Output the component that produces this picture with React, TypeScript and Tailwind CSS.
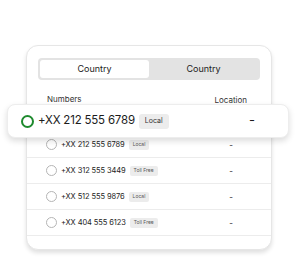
import React from 'react';

const rows = [
  { num: '+XX 212 555 6789', type: 'Local' },
  { num: '+XX 312 555 3449', type: 'Toll Free' },
  { num: '+XX 512 555 9876', type: 'Local' },
  { num: '+XX 404 555 6123', type: 'Toll Free' },
];

export default function App() {
  return (
    <div className="relative w-[300px] h-[278px] bg-white pt-[45px] pl-[26px] font-['Inter',sans-serif] text-[#1c1c1c]">
      {/* card */}
      <div className="w-[246px] h-[205px] rounded-[12px] border border-[#e6e6e6] bg-white shadow-[0_3px_4px_rgba(0,0,0,0.12)] overflow-hidden">
        {/* tabs */}
        <div className="mx-[11px] mt-[12px] h-[22px] rounded-[4px] bg-[#e3e3e3] p-[2px] flex text-[9px]">
          <div className="flex-1 rounded-[3px] bg-white flex items-center justify-center">Country</div>
          <div className="flex-1 flex items-center justify-center">Country</div>
        </div>

        {/* header */}
        <div className="flex justify-between pl-[20px] pr-[24px] pt-[13px] h-[52px] border-b border-[#ececec] text-[8px] leading-[12px] text-[#333]">
          <span>Numbers</span>
          <span className="mt-[1px]">Location</span>
        </div>

        {rows.map((r, i) => (
          <div key={i} className="flex items-center h-[26px] pl-[19px] border-b border-[#ececec] whitespace-nowrap">
            <span className="w-[11px] h-[11px] rounded-full border border-[#b5b5b5] shrink-0" />
            <span className="ml-[4px] text-[7.5px] tracking-[-0.1px]">{r.num}</span>
            <span className="ml-[4px] rounded-[2px] bg-[#ececec] px-[4px] h-[10px] flex items-center text-[5px] text-[#555]">{r.type}</span>
            <span className="ml-auto mr-[38px] text-[8px]">-</span>
          </div>
        ))}
      </div>

      {/* floating selected row */}
      <div className="absolute left-[7px] top-[104px] w-[282px] h-[34px] rounded-[8px] bg-white border border-[#ededed] shadow-[0_3px_6px_rgba(0,0,0,0.14)] flex items-center pl-[13px] whitespace-nowrap">
        <span className="w-[13px] h-[13px] rounded-full border-[2.5px] border-[#1e8a2e] shrink-0" />
        <span className="ml-[4px] text-[11.5px] tracking-[-0.2px]">+XX 212 555 6789</span>
        <span className="ml-[4px] rounded-[3px] bg-[#ececec] px-[6px] h-[15px] flex items-center text-[7px] text-[#333]">Local</span>
        <span className="ml-auto mr-[33px] text-[13px]">-</span>
      </div>
    </div>
  );
}
